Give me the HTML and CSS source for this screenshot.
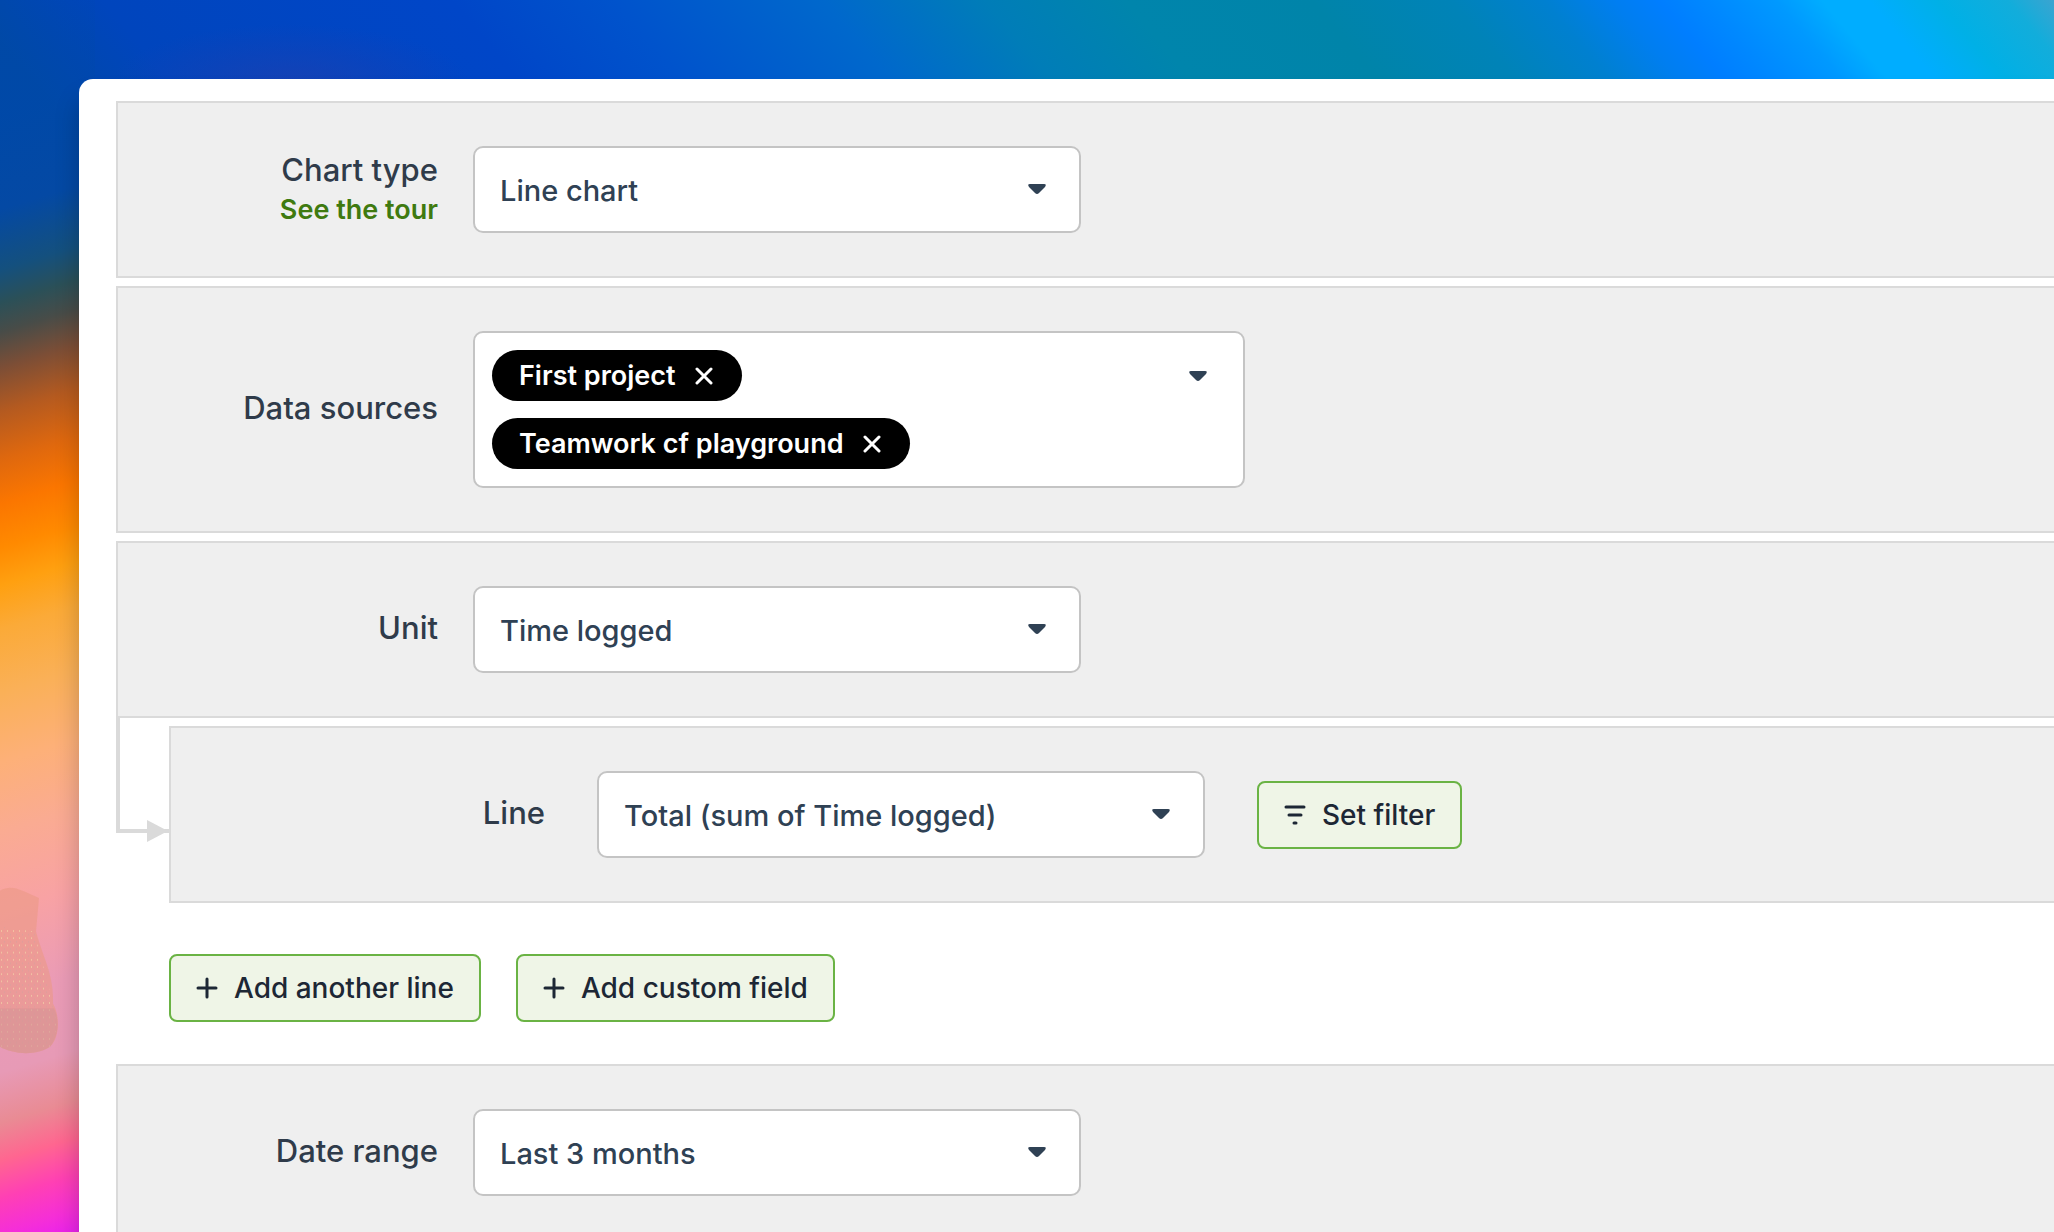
FILE: index.html
```html
<!DOCTYPE html>
<html lang="en">
<head>
    <meta charset="UTF-8">
    <meta name="viewport" content="width=device-width, initial-scale=1.0">
    <title>Chart settings</title>
    <link rel="stylesheet" href="styles.css">
</head>
<body>
    <svg class="wallpaper-shape" viewBox="0 0 60 140" preserveAspectRatio="none" aria-hidden="true">
        <defs>
            <pattern id="grain" width="6" height="6" patternUnits="userSpaceOnUse">
                <rect width="1" height="1" x="1" y="1" fill="#f4d6a8"/>
                <rect width="1" height="1" x="4" y="4" fill="#d9a09c"/>
            </pattern>
        </defs>
        <path d="M0 4C12-2 22 4 39 10L36 38C44 62 54 74 53 98C60 108 60 126 50 134C36 142 12 140 0 134Z" fill="#eb9a86" opacity="0.6"/>
        <path d="M0 34L34 38L53 98L57 118L50 134L0 134Z" fill="url(#grain)"/>
        <path d="M0 102H54C60 112 58 126 50 134C36 142 12 140 0 134Z" fill="#d69496" opacity="0.6"/>
    </svg>

    <main class="panel">
        <form class="settings">
            <div class="row">
                <div class="row-label with-link">
                    <label for="chartType">Chart type</label>
                    <a href="#" class="tour-link">See the tour</a>
                </div>
                <div class="select">
                    <select id="chartType">
                        <option>Line chart</option>
                        <option>Bar chart</option>
                    </select>
                    <svg class="caret" viewBox="0 0 18 10"><path d="M2 0H16Q19 0 17 3L11 9Q9 11 7 9L1 3Q-1 0 2 0Z"/></svg>
                </div>
            </div>

            <div class="row">
                <div class="row-label" id="sourcesLabel">Data sources</div>
                <div class="multi-select" role="group" aria-labelledby="sourcesLabel">
                    <div class="chips">
                        <span class="chip">First project
                            <button type="button" aria-label="Remove First project"><svg viewBox="0 0 18 18"><path d="M2 2L16 16M16 2L2 16"/></svg></button>
                        </span>
                        <span class="chip">Teamwork cf playground
                            <button type="button" aria-label="Remove Teamwork cf playground"><svg viewBox="0 0 18 18"><path d="M2 2L16 16M16 2L2 16"/></svg></button>
                        </span>
                    </div>
                    <button type="button" class="open-btn" aria-label="Show data sources">
                        <svg viewBox="0 0 18 10"><path d="M2 0H16Q19 0 17 3L11 9Q9 11 7 9L1 3Q-1 0 2 0Z"/></svg>
                    </button>
                </div>
            </div>

            <div class="row">
                <div class="row-label"><label for="unit">Unit</label></div>
                <div class="select">
                    <select id="unit">
                        <option>Time logged</option>
                        <option>Estimate</option>
                    </select>
                    <svg class="caret" viewBox="0 0 18 10"><path d="M2 0H16Q19 0 17 3L11 9Q9 11 7 9L1 3Q-1 0 2 0Z"/></svg>
                </div>
            </div>

            <div class="nested">
                <svg class="connector" viewBox="0 0 53 124" aria-hidden="true">
                    <path d="M2 0V113H53" fill="none" stroke="#dadada" stroke-width="4"/>
                    <path d="M31 102L52 113L31 124Z" fill="#dadada"/>
                </svg>
                <div class="row row-line">
                    <div class="row-label"><label for="line">Line</label></div>
                    <div class="select">
                        <select id="line">
                            <option>Total (sum of Time logged)</option>
                        </select>
                        <svg class="caret" viewBox="0 0 18 10"><path d="M2 0H16Q19 0 17 3L11 9Q9 11 7 9L1 3Q-1 0 2 0Z"/></svg>
                    </div>
                    <button type="button" class="btn">
                        <svg viewBox="0 0 22 22"><path d="M2 3H20M5 11H17M10 19H12"/></svg>
                        Set filter
                    </button>
                </div>
                <div class="actions">
                    <button type="button" class="btn">
                        <svg viewBox="0 0 22 22"><path d="M11 2V20M2 11H20"/></svg>
                        Add another line
                    </button>
                    <button type="button" class="btn">
                        <svg viewBox="0 0 22 22"><path d="M11 2V20M2 11H20"/></svg>
                        Add custom field
                    </button>
                </div>
            </div>

            <div class="row">
                <div class="row-label"><label for="dateRange">Date range</label></div>
                <div class="select">
                    <select id="dateRange">
                        <option>Last 3 months</option>
                        <option>Last 6 months</option>
                    </select>
                    <svg class="caret" viewBox="0 0 18 10"><path d="M2 0H16Q19 0 17 3L11 9Q9 11 7 9L1 3Q-1 0 2 0Z"/></svg>
                </div>
            </div>
        </form>
    </main>
</body>
</html>
```
FILE: styles.css
```css
* {
    box-sizing: border-box;
}
body {
    font-family: Inter, 'Open Sans', sans-serif;
    font-weight: 550;
    color: #2f3b4a;
    margin: 0;
    height: 100vh;
    overflow: hidden;
    position: relative;
    display: flex;
    flex-direction: column;
    background:
        radial-gradient(ellipse 180px 60px at 290px 84px, rgba(30, 64, 176, 0.7), rgba(30, 64, 176, 0)) no-repeat,
        linear-gradient(163deg, rgba(0, 72, 190, 0) 0, rgba(0, 72, 170, 0.4) 110px, #0449a4 200px, #14507e 258px, #2b5058 290px, #484c48 318px, #7c4e36 352px, #b45a20 394px, #df680e 440px, #fb7600 482px, #ff8a00 524px, #ffa010 560px, #fbaa38 602px, #fab057 662px, #fdb078 729px, #faab92 796px, #f8a2a4 872px, #ea9bb6 954px, #e79ab6 1026px, #e98b94 1074px, #ff6690 1110px, #ff40b4 1146px, #f52ed8 1180px, #e71ff2 1206px) 0 0 / 95px 100% no-repeat,
        linear-gradient(50deg, #0049a6 10%, #0045bd 16%, #0046c8 31%, #0053cc 38%, #0068cc 47%, #007db8 54%, #0085ac 60%, #0084a9 68%, #0083b8 74%, #0080d0 78%, #007ef0 81%, #007eff 83%, #0088ff 85%, #0099ff 88%, #00adff 90%, #00adff 92%, #00b0e6 95%, #12addb 98%, #3ba4d0 100%) 0 0 / 100% 320px no-repeat,
        #fff;
}
.wallpaper-shape {
    position: absolute;
    left: 0;
    top: 886px;
    width: 60px;
    height: 168px;
}
.panel {
    flex: 1 0 auto;
    position: relative;
    margin: 79px 0 0 79px;
    padding: 22px 0 0 37px;
    background: #fff;
    border-radius: 14px 0 0 0;
    box-shadow: 0 20px 24px rgba(0, 0, 0, 0.22);
}
.settings {
    display: flex;
    flex-direction: column;
    gap: 8px;
}
.row {
    display: flex;
    align-items: center;
    gap: 35px;
    padding: 43px 0;
    background: #efefef;
    border: 2px solid #dadada;
    border-right: none;
}
.row-label {
    width: 320px;
    padding-bottom: 4px;
    text-align: right;
    font-size: 31px;
    line-height: 40px;
}
.row-label.with-link {
    padding-bottom: 0;
}
.row-label label {
    display: block;
}
.tour-link {
    display: block;
    color: #3f7a10;
    font-size: 27px;
    font-weight: 600;
    text-decoration: none;
}
.tour-link:hover {
    text-decoration: underline;
}

/* dropdowns */
.select {
    position: relative;
    width: 608px;
}
.select select {
    appearance: none;
    display: block;
    width: 100%;
    height: 87px;
    padding: 2px 80px 0 25px;
    border: 2px solid #c4c4c4;
    border-radius: 10px;
    background: #fff;
    color: #2f4154;
    font: inherit;
    font-size: 29px;
}
.caret {
    position: absolute;
    right: 35px;
    top: 38px;
    width: 18px;
    height: 10px;
    fill: #2f4154;
    pointer-events: none;
}
.multi-select {
    display: flex;
    justify-content: space-between;
    align-items: flex-start;
    width: 772px;
    padding: 17px;
    border: 2px solid #c4c4c4;
    border-radius: 10px;
    background: #fff;
}
.chips {
    display: flex;
    flex-direction: column;
    align-items: flex-start;
    gap: 17px;
}
.chip {
    display: flex;
    align-items: center;
    gap: 19px;
    height: 51px;
    padding: 0 29px 0 27px;
    border-radius: 26px;
    background: #000;
    color: #fff;
    font-size: 27px;
    font-weight: 600;
}
.chip button,
.open-btn {
    display: flex;
    padding: 0;
    border: none;
    background: none;
    cursor: pointer;
}
.chip svg {
    width: 18px;
    height: 18px;
    fill: none;
    stroke: #fff;
    stroke-width: 3;
    stroke-linecap: round;
}
.open-btn {
    padding: 21px 19px;
}
.open-btn svg {
    width: 18px;
    height: 10px;
    fill: #2f4154;
}

/* lines that belong to the unit */
.nested {
    position: relative;
    margin-left: 53px;
}
.connector {
    position: absolute;
    left: -53px;
    top: -8px;
    width: 53px;
    height: 124px;
}
.row-line {
    gap: 52px;
}
.row-line .row-label {
    width: 374px;
}
.actions {
    display: flex;
    gap: 35px;
    padding: 51px 0 34px;
}
.btn {
    display: flex;
    align-items: center;
    gap: 16px;
    height: 68px;
    padding: 0 25px;
    border: 2px solid #6ab344;
    border-radius: 8px;
    background: #eff5e7;
    color: #1d2735;
    font: inherit;
    font-size: 28px;
    cursor: pointer;
}
.btn:hover {
    background: #e4efd7;
}
.btn svg {
    width: 22px;
    height: 22px;
    fill: none;
    stroke: #1d2735;
    stroke-width: 3;
    stroke-linecap: round;
}
```
